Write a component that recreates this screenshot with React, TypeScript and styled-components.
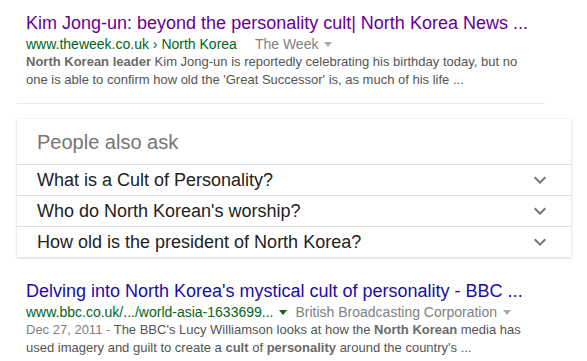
import React from "react";
import styled, { createGlobalStyle } from "styled-components";

const GlobalStyle = createGlobalStyle`
  body {
    margin: 0;
    background: #fff;
    font-family: "Liberation Sans", Arial, sans-serif;
  }
`;

const Page = styled.div`
  width: 587px;
  height: 361px;
  overflow: hidden;
  padding-top: 12px;
  box-sizing: border-box;
`;

const Result = styled.div`
  padding-left: 26px;
  width: 512px;
`;

const Title = styled.a<{ $visited?: boolean }>`
  display: block;
  font-size: 18px;
  line-height: 22px;
  color: ${(p) => (p.$visited ? "#660099" : "#1a0dab")};
  text-decoration: none;
  white-space: nowrap;
`;

const UrlRow = styled.div`
  display: flex;
  align-items: center;
  margin-top: 2px;
  font-size: 14px;
  line-height: 16px;
  white-space: nowrap;
`;

const Cite = styled.span`
  color: #006621;
`;

const Source = styled.span`
  color: #808080;
`;

const Caret = styled.span<{ $color: string }>`
  display: inline-block;
  width: 0;
  height: 0;
  margin: 1px 8px 0 6px;
  border-top: 5px solid ${(p) => p.$color};
  border-left: 4px solid transparent;
  border-right: 4px solid transparent;
`;

const Spacer = styled.span`
  width: 18px;
`;

const Snippet = styled.div`
  margin-top: 1px;
  font-size: 13px;
  line-height: 17.5px;
  color: #545454;

  b {
    color: #6a6a6a;
  }
`;

const DateText = styled.span`
  color: #808080;
`;

const Divider = styled.hr`
  margin: 15px 0 0 17px;
  width: 528px;
  border: 0;
  border-top: 1px solid #ebebeb;
`;

const Card = styled.div`
  margin: 15px 0 0 17px;
  width: 554px;
  background: #fff;
  box-shadow: 0 1px 3px rgba(0, 0, 0, 0.16), 0 0 1px rgba(0, 0, 0, 0.1);
`;

const CardHeader = styled.div`
  padding: 11px 20px 10px;
  font-size: 20px;
  line-height: 24px;
  color: #757575;
`;

const Question = styled.div`
  display: flex;
  align-items: center;
  justify-content: space-between;
  height: 30px;
  padding: 0 19px 0 20px;
  border-top: 1px solid #dfdfdf;
  font-size: 18px;
  line-height: 30px;
  color: #222;
`;

const Chevron = styled.svg`
  width: 24px;
  height: 24px;
  fill: #757575;
  flex-shrink: 0;
`;

const SecondResult = styled(Result)`
  margin-top: 23px;
`;

const questions = [
  "What is a Cult of Personality?",
  "Who do North Korean's worship?",
  "How old is the president of North Korea?",
];

export default function App() {
  return (
    <Page>
      <GlobalStyle />
      <Result>
        <Title $visited>
          Kim Jong-un: beyond the personality cult| North Korea News ...
        </Title>
        <UrlRow>
          <Cite>www.theweek.co.uk › North Korea</Cite>
          <Spacer />
          <Source>The Week</Source>
          <Caret $color="#aaa" />
        </UrlRow>
        <Snippet>
          <b>North Korean leader</b> Kim Jong-un is reportedly celebrating his
          birthday today, but no one is able to confirm how old the 'Great
          Successor' is, as much of his life ...
        </Snippet>
      </Result>
      <Divider />
      <Card>
        <CardHeader>People also ask</CardHeader>
        {questions.map((q) => (
          <Question key={q}>
            <span>{q}</span>
            <Chevron viewBox="0 0 24 24">
              <path d="M16.59 8.59L12 13.17 7.41 8.59 6 10l6 6 6-6z" />
            </Chevron>
          </Question>
        ))}
      </Card>
      <SecondResult>
        <Title>Delving into North Korea's mystical cult of personality - BBC ...</Title>
        <UrlRow>
          <Cite>www.bbc.co.uk/.../world-asia-1633699...</Cite>
          <Caret $color="#006621" />
          <Source>British Broadcasting Corporation</Source>
          <Caret $color="#aaa" />
        </UrlRow>
        <Snippet>
          <DateText>Dec 27, 2011 - </DateText>The BBC's Lucy Williamson looks at
          how the <b>North Korean</b> media has used imagery and guilt to create
          a <b>cult</b> of <b>personality</b> around the country's ...
        </Snippet>
      </SecondResult>
    </Page>
  );
}
